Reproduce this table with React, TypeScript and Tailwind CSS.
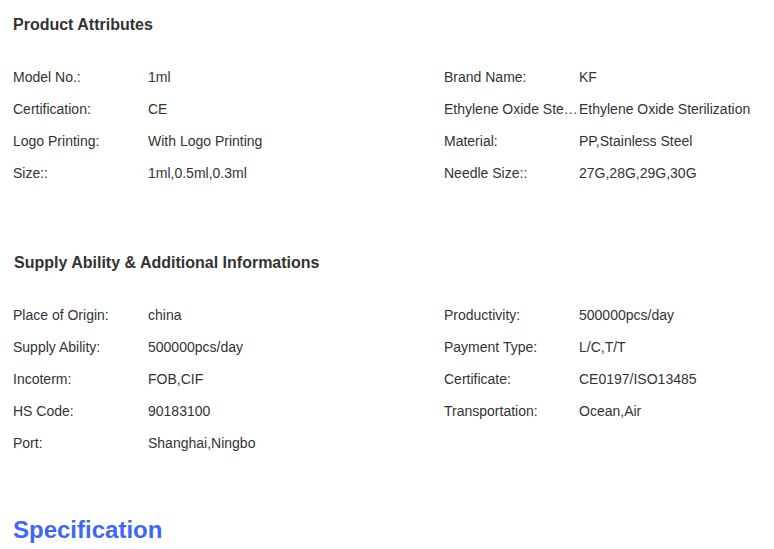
const productAttributes: [string, string][] = [
  ['Model No.:', '1ml'],
  ['Brand Name:', 'KF'],
  ['Certification:', 'CE'],
  ['Ethylene Oxide Sterilization:', 'Ethylene Oxide Sterilization'],
  ['Logo Printing:', 'With Logo Printing'],
  ['Material:', 'PP,Stainless Steel'],
  ['Size::', '1ml,0.5ml,0.3ml'],
  ['Needle Size::', '27G,28G,29G,30G'],
]

const supplyInfo: [string, string][] = [
  ['Place of Origin:', 'china'],
  ['Productivity:', '500000pcs/day'],
  ['Supply Ability:', '500000pcs/day'],
  ['Payment Type:', 'L/C,T/T'],
  ['Incoterm:', 'FOB,CIF'],
  ['Certificate:', 'CE0197/ISO13485'],
  ['HS Code:', '90183100'],
  ['Transportation:', 'Ocean,Air'],
  ['Port:', 'Shanghai,Ningbo'],
]

function AttrGrid({ items }: { items: [string, string][] }) {
  return (
    <div className="mt-[11px] grid grid-cols-[431px_1fr]">
      {items.map(([label, value]) => (
        <div key={label} className="flex h-8 items-center text-[14px] text-[#333]">
          <span className="w-[135px] shrink-0 truncate">{label}</span>
          <span className="whitespace-nowrap">{value}</span>
        </div>
      ))}
    </div>
  )
}

export default function App() {
  return (
    <div
      className="h-[549px] w-[774px] overflow-hidden bg-white pl-[13px]"
      style={{ fontFamily: '"Liberation Sans", Arial, sans-serif' }}
    >
      <h2 className="flex h-[50px] items-center text-[16px] font-bold text-[#333]">Product Attributes</h2>
      <AttrGrid items={productAttributes} />

      <h2 className="mt-[49px] flex h-[50px] items-center pl-px text-[16px] font-bold text-[#333]">
        Supply Ability &amp; Additional Informations
      </h2>
      <AttrGrid items={supplyInfo} />

      <h1 className="mt-[51px] flex h-10 items-center text-[24px] font-bold text-[#3f67f5]">Specification</h1>
    </div>
  )
}
